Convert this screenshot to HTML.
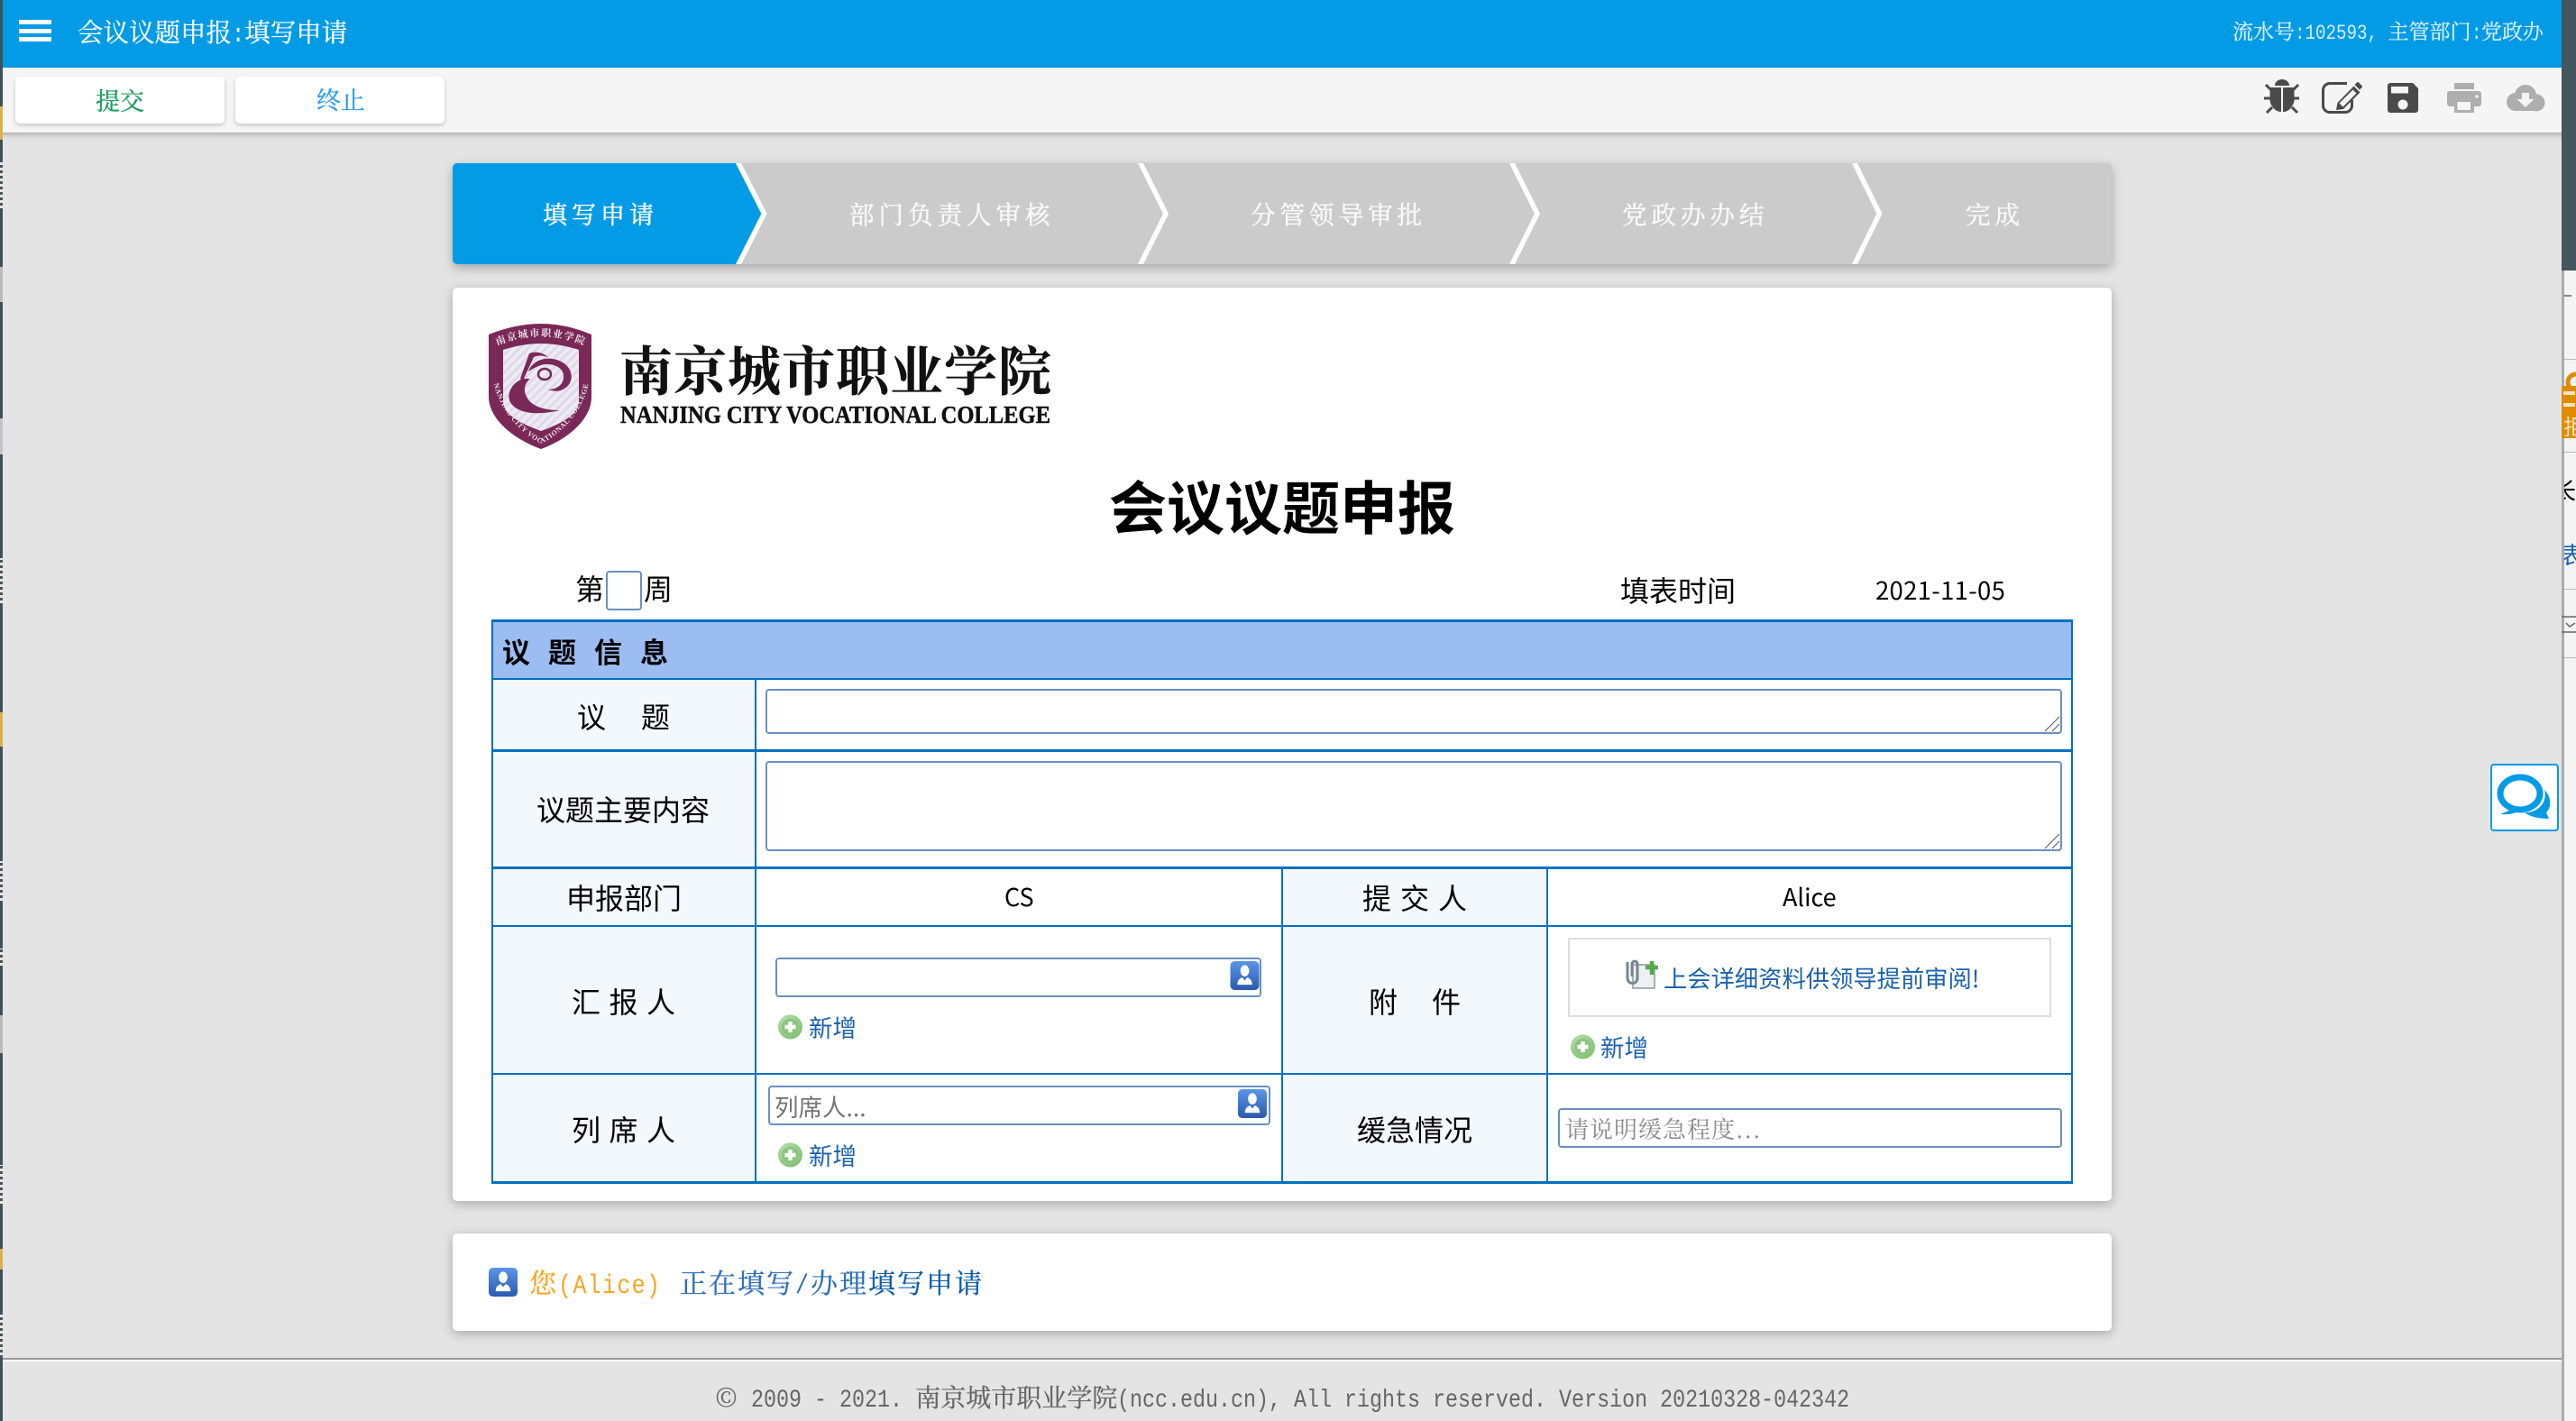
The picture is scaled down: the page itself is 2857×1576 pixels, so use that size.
<!DOCTYPE html>
<html lang="zh-CN">
<head>
<meta charset="utf-8">
<title>会议议题申报</title>
<style>
html,body{margin:0;padding:0;width:2857px;height:1576px;overflow:hidden;background:#e4e4e4}
body{position:relative;font-family:"Noto Sans CJK SC","Liberation Sans",sans-serif;color:#000}
.b{position:absolute;box-sizing:border-box}
.t{position:absolute;white-space:nowrap;height:40px;line-height:40px}
.s{font-family:"Noto Serif CJK SC","Liberation Serif",serif;-webkit-text-stroke:.3px currentColor}
.m{display:inline-block;font-family:"Liberation Mono",monospace;white-space:pre;transform:scaleX(.8333);transform-origin:0 50%;-webkit-text-stroke:0}
.step{font-size:27px;letter-spacing:5px;color:#fff;-webkit-text-stroke:.45px #fff}
.lb{font-size:32px}
.add{font-size:26.5px;color:#1a62ad}
input,textarea{position:absolute;box-sizing:border-box;margin:0;background:#fff;border:2px solid #6a8fc3;border-radius:4px;outline:none;font-family:"Noto Sans CJK SC",sans-serif;font-size:26.5px;padding:0 5px;resize:none}
input::placeholder{color:#757575;opacity:1}
#urg::placeholder{color:#8a8a8a}
</style>
</head>
<body>
<div class="b" style="left:0;top:0;width:2857px;height:75px;background:#039be5"></div>
<div class="b" style="left:0;top:75px;width:2857px;height:72px;background:#f5f5f5;box-shadow:0 2px 6px rgba(0,0,0,.28)"></div>
<div class="b" style="left:17px;top:85px;width:232px;height:52px;background:#fff;border-radius:5px;box-shadow:0 2px 5px rgba(0,0,0,.2)"></div>
<div class="b" style="left:261px;top:85px;width:232px;height:52px;background:#fff;border-radius:5px;box-shadow:0 2px 5px rgba(0,0,0,.2)"></div>
<div class="b" style="left:502px;top:181px;width:1840px;height:112px;background:#cbcbcb;border-radius:5px;box-shadow:0 4px 12px rgba(0,0,0,.28)"></div>
<div class="b" style="left:502px;top:319px;width:1840px;height:1013px;background:#fff;border-radius:5px;box-shadow:0 3px 12px rgba(0,0,0,.28)"></div>
<div class="b" style="left:502px;top:1368px;width:1840px;height:108px;background:#fff;border-radius:5px;box-shadow:0 3px 12px rgba(0,0,0,.28)"></div>
<div class="b" style="left:0;top:1506px;width:2841px;height:2px;background:#9a9a9a"></div>
<div class="b" style="left:0;top:1508px;width:2841px;height:2px;background:#fff"></div>
<div class="b" style="left:546px;top:754px;width:292px;height:557px;background:#f3f8fd"></div>
<div class="b" style="left:1422px;top:964px;width:294px;height:347px;background:#f3f8fd"></div>
<div class="b" style="left:547px;top:690px;width:1751px;height:62px;background:#9bbdf1"></div>
<div class="b" style="left:1739px;top:1040px;width:536px;height:88px;background:#fff;border:2px solid #ddd"></div>

<svg style="position:absolute;left:0;top:0" width="2857" height="1576" viewBox="0 0 2857 1576" xmlns="http://www.w3.org/2000/svg">
<defs>
<clipPath id="stepclip"><rect x="502" y="181" width="1840" height="112" rx="5"/></clipPath>
<linearGradient id="pg" x1="0" y1="0" x2="0" y2="1"><stop offset="0" stop-color="#5d95e8"/><stop offset="1" stop-color="#2a59ad"/></linearGradient>
<radialGradient id="gg" cx=".4" cy=".35" r=".8"><stop offset="0" stop-color="#c6e6ba"/><stop offset="1" stop-color="#74b767"/></radialGradient>
<pattern id="st" width="7" height="7" patternUnits="userSpaceOnUse" patternTransform="rotate(45)"><rect width="7" height="7" fill="#efebf4"/><rect width="3" height="7" fill="#dedbe9"/></pattern>
<pattern id="lines" width="3" height="6" patternUnits="userSpaceOnUse"><rect width="3" height="3" fill="#e6e6e6"/><rect y="3" width="3" height="3" fill="#46555e"/></pattern>
<symbol id="person" viewBox="0 0 33 33"><rect width="33" height="33" rx="5" fill="url(#pg)"/><ellipse cx="16.5" cy="11" rx="5" ry="6.5" fill="#fff"/><path d="M8 27C8 21 11 20 13.500 18.500L16.500 22 19.500 18.500C22 20 25 21 25 27Z" fill="#fff"/></symbol>
<symbol id="plus" viewBox="0 0 28 28"><circle cx="14" cy="14" r="13.5" fill="url(#gg)"/><circle cx="14" cy="14" r="9.5" fill="#8cc67e"/><path d="M14 8v12M8 14h12" stroke="#fff" stroke-width="4.5"/></symbol>
</defs>

<!-- left and right window strips -->
<rect x="0" y="0" width="3" height="1576" fill="#3f505a"/>
<rect x="0" y="118" width="3" height="37" fill="#dcb04c"/>
<rect x="0" y="180" width="3" height="51" fill="url(#lines)"/>
<rect x="0" y="296" width="3" height="39" fill="#bbb"/>
<rect x="0" y="464" width="3" height="40" fill="#c2c2c8"/>
<rect x="0" y="619" width="3" height="51" fill="url(#lines)"/>
<rect x="0" y="790" width="3" height="38" fill="#dcb04c"/>
<rect x="0" y="955" width="3" height="47" fill="url(#lines)"/>
<rect x="0" y="1052" width="3" height="19" fill="url(#lines)"/>
<rect x="0" y="1126" width="3" height="42" fill="#bbb"/>
<rect x="0" y="1292" width="3" height="46" fill="url(#lines)"/>
<rect x="0" y="1385" width="3" height="23" fill="#dcb04c"/>
<rect x="0" y="1458" width="3" height="47" fill="url(#lines)"/>
<rect x="2841" y="0" width="16" height="300" fill="#43555f"/>
<rect x="2841" y="300" width="16" height="1276" fill="#f4f4f4"/>
<rect x="2841" y="300" width="3" height="1276" fill="#aaa"/>
<rect x="2844" y="327" width="8" height="2" fill="#888"/>
<rect x="2844" y="398" width="13" height="1" fill="#bbb"/>
<rect x="2841" y="428" width="16" height="58" fill="#e08c00"/>
<circle cx="2857" cy="424" r="9" fill="none" stroke="#e08c00" stroke-width="5"/>
<rect x="2843" y="434" width="13" height="4" fill="#f6e3c0"/><rect x="2843" y="447" width="13" height="4" fill="#f6e3c0"/>
<rect x="2844" y="501" width="13" height="1" fill="#bbb"/>
<rect x="2844" y="653" width="13" height="1" fill="#bbb"/>
<path d="M2841 684h16M2841 701h16" stroke="#666" stroke-width="1.5"/><path d="M2846 691l4 4 6-4" fill="none" stroke="#666" stroke-width="1.5"/>
<rect x="2844" y="729" width="13" height="1" fill="#bbb"/>

<!-- hamburger -->
<rect x="21" y="22" width="36" height="5" fill="#fff"/><rect x="21" y="32" width="36" height="5" fill="#fff"/><rect x="21" y="41" width="36" height="5" fill="#fff"/>

<!-- toolbar icons -->
<g fill="#4a4a4a" stroke="none">
<path d="M2523 95a8 7 0 0 1 16 0z"/>
<path d="M2517.500 97H2530V124C2523 124 2519 118 2517.500 112Z"/>
<path d="M2532 97H2544.500V112C2543 118 2539 124 2532 124Z"/>
</g>
<path d="M2513 94l6 6M2511 109h8M2514 125l6-6M2549 94l-6 6M2550 109h-8M2548 125l-6-6" stroke="#4a4a4a" stroke-width="3" fill="none"/>
<path d="M2603 92.500H2584a7.500 7.500 0 0 0-7.500 7.500V117a7.500 7.500 0 0 0 7.500 7.500H2601a7.500 7.500 0 0 0 7.500-7.500V111" fill="none" stroke="#4a4a4a" stroke-width="3"/>
<path d="M2591 122l1.500-8 18-18.500 7 7L2599 121ZM2594.500 114.500l4 4 15-15-4-4Z" fill="#4a4a4a" fill-rule="evenodd"/>
<path d="M2611.500 94l2.500-2.500q1-1 2 0l3.500 3.500q1 1 0 2l-2.500 2.500Z" fill="#4a4a4a"/>
<path d="M2651 92H2676L2682 98V122a3 3 0 0 1-3 3H2651a3 3 0 0 1-3-3V95a3 3 0 0 1 3-3Z" fill="#4a4a4a"/>
<rect x="2652" y="96" width="19" height="7.500" fill="#f5f5f5"/><circle cx="2665" cy="116" r="5.500" fill="#f5f5f5"/>
<g fill="#aeaeae">
<rect x="2722" y="92" width="22" height="7"/>
<rect x="2714" y="101" width="38" height="17" rx="3"/>
<rect x="2722" y="112" width="22" height="13"/>
</g>
<rect x="2725.500" y="113" width="14.500" height="9" fill="#f5f5f5"/><circle cx="2747" cy="107" r="1.700" fill="#f5f5f5"/>
<g fill="#aeaeae"><circle cx="2790" cy="113" r="10"/><circle cx="2801" cy="106" r="12"/><circle cx="2813" cy="114" r="9.500"/><rect x="2790" y="110" width="23" height="13"/></g>
<path d="M2797 103h8v7h5.500l-9.500 9-9.500-9h5.500z" fill="#f5f5f5"/>

<!-- step chevrons -->
<g clip-path="url(#stepclip)">
<path d="M502 175H816L845 237 816 299H502Z" fill="#039be5"/>
<path d="M816 175L847.500 237 816 299M1262 175L1293 237 1262 299M1674 175L1705 237 1674 299M2054 175L2084.500 237 2054 299" fill="none" stroke="#fff" stroke-width="5.500"/>
</g>

<!-- logo shield -->
<path d="M542 371Q572 359 600 359 628 359 656 371V440C656 466 628 488 600 498 572 488 542 466 542 440Z" fill="#7a2858"/>
<path d="M558 388Q580 381 600 381 620 381 642 388V445C642 460 622 470 600 478 578 470 558 460 558 445Z" fill="url(#st)"/>
<path d="M580 420C566 425 560 440 568 449 578 460 600 460 621 455 606 455 590 452 584 440 580 432 582 425 588 420Z" fill="#7a2858"/>
<path d="M586 412C590 400 606 394 620 400 636 406 638 424 626 431 620 435 614 434 608 432 618 432 626 426 625 416 624 406 610 402 600 405 594 407 589 410 586 412Z" fill="#7a2858"/>
<path d="M587 392C594 389 602 391 608 396 600 394 596 394 592 396L580 422 577 420Z" fill="#7a2858"/>
<ellipse cx="604" cy="415" rx="7" ry="6" fill="none" stroke="#7a2858" stroke-width="2.500"/>
<path id="arcTop" d="M549 384Q600 362 651 384" fill="none"/>
<text font-family="'Noto Serif CJK SC',serif" font-size="11" fill="#efe6ec" font-weight="700"><textPath href="#arcTop" startOffset="50%" text-anchor="middle" letter-spacing="1.500">南京城市职业学院</textPath></text>
<path id="arcBot" d="M546 417C551 455 580 482 600 492 622 482 650 455 654 417" fill="none"/>
<text font-family="'Liberation Serif',serif" font-size="8" fill="#efe6ec" font-weight="700"><textPath href="#arcBot" startOffset="50%" text-anchor="middle" letter-spacing=".6">NANJING CITY VOCATIONAL COLLEGE</textPath></text>
<text x="688" y="469" font-family="'Liberation Serif',serif" font-weight="700" font-size="27" textLength="477" lengthAdjust="spacingAndGlyphs" fill="#111" stroke="#111" stroke-width=".5">NANJING CITY VOCATIONAL COLLEGE</text>

<!-- table lines -->
<g fill="#0070c0">
<rect x="545" y="687" width="1754" height="3"/>
<rect x="545" y="1310" width="1754" height="3"/>
<rect x="545" y="687" width="2" height="626"/>
<rect x="2297" y="687" width="2" height="626"/>
<rect x="545" y="752" width="1754" height="2"/>
<rect x="545" y="831" width="1754" height="3"/>
<rect x="545" y="961" width="1754" height="3"/>
<rect x="545" y="1026" width="1754" height="2"/>
<rect x="545" y="1190" width="1754" height="2"/>
<rect x="837" y="752" width="2" height="560"/>
<rect x="1421" y="961" width="2" height="351"/>
<rect x="1715" y="961" width="2" height="351"/>
</g>

<!-- attachment icon -->
<rect x="1811" y="1070" width="24" height="26" fill="#eef1f3" stroke="#8c98a0" stroke-width="1.500"/>
<path d="M1805 1067v18a5.500 5.500 0 0 0 11 0v-16a3 3 0 0 0-6 0v14" fill="none" stroke="#76858f" stroke-width="3"/>
<path d="M1832 1066v15M1825 1073h14" stroke="#54a84a" stroke-width="4.500"/>

<!-- add icons -->
<use href="#plus" x="862" y="1125" width="29" height="28"/>
<use href="#plus" x="862" y="1267" width="29" height="28"/>
<use href="#plus" x="1741" y="1147" width="29" height="28"/>
<use href="#person" x="542" y="1406" width="32" height="32"/>

<!-- chat button -->
<rect x="2763" y="848" width="74" height="73" rx="3" fill="#fff" stroke="#039be5" stroke-width="2"/>
<path d="M2822 876C2830 884 2830 895 2824 901L2827 908C2816 908 2806 906 2800 901 2812 902 2826 892 2822 876Z" fill="#039be5"/>
<ellipse cx="2795" cy="880" rx="22" ry="18" fill="#fff" stroke="#039be5" stroke-width="7"/>
<path d="M2786 893L2783 899 2773 903C2782 904 2792 902 2799 897Z" fill="#039be5"/>
</svg>

<!-- inputs -->
<input style="left:672px;top:633px;width:40px;height:44px" aria-label="周">
<textarea style="left:849px;top:764px;width:1438px;height:50px" aria-label="议题"></textarea>
<textarea style="left:849px;top:844px;width:1438px;height:100px" aria-label="内容"></textarea>
<input style="left:860px;top:1062px;width:539px;height:44px" aria-label="汇报人">
<input style="left:852px;top:1204px;width:557px;height:44px;padding-top:0" placeholder="列席人...">
<input id="urg" style="left:1728px;top:1229px;width:559px;height:44px;font-family:'Noto Serif CJK SC',serif;font-size:26px;letter-spacing:1px;padding-left:6px" placeholder="请说明缓急程度...">
<svg style="position:absolute;left:0;top:0;pointer-events:none" width="2857" height="1576" viewBox="0 0 2857 1576">
<use href="#person" x="1364" y="1066" width="33" height="32"/>
<use href="#person" x="1373" y="1208" width="32" height="32"/>
<path d="M2268 811L2284 795M2276 811L2284 803M2268 941L2284 925M2276 941L2284 933" stroke="#555" stroke-width="1" fill="none"/>
</svg>

<!-- clipped neighbouring content in the right strip -->
<div class="b" style="left:2844px;top:452px;width:13px;height:190px;overflow:hidden">
<div class="t" style="left:-1px;top:0;font-size:24px;color:#f6e3c0">拒</div>
<div class="t" style="left:-13px;top:72px;font-size:26px">长事</div>
<div class="t" style="left:-4px;top:143px;font-size:26px;color:#1a62ad">表</div>
</div>

<!-- header -->
<div class="t s" style="left:86px;top:15px;font-size:28.500px;color:#fff">会议议题申报<span class="m" style="width:.5em">:</span>填写申请</div>
<div class="t s" style="left:2476px;top:14px;font-size:23px;color:#d9eefa">流水号<span class="m" style="width:4.5em">:102593, </span>主管部门<span class="m" style="width:.5em">:</span>党政办</div>
<div class="t s" style="left:106px;top:91px;font-size:27px;color:#1a9a5c">提交</div>
<div class="t s" style="left:351px;top:90px;font-size:27px;color:#2a9df4">终止</div>

<!-- steps -->
<div class="t s step" style="left:602px;top:217px">填写申请</div>
<div class="t s step" style="left:942px;top:216px;font-size:27.500px;color:#f7f7f7">部门负责人审核</div>
<div class="t s step" style="left:1387px;top:216px;font-size:27.500px;color:#f7f7f7">分管领导审批</div>
<div class="t s step" style="left:1799px;top:216px;font-size:27.500px;color:#f7f7f7">党政办办结</div>
<div class="t s step" style="left:2180px;top:216px;font-size:27.500px;color:#f7f7f7">完成</div>

<!-- logo text & title -->
<div class="t s" style="left:687px;top:388px;font-size:59px;font-weight:700;letter-spacing:1px;color:#111">南京城市职业学院</div>
<div class="t" style="left:1230px;top:540px;font-size:64px;font-weight:700">会议议题申报</div>

<!-- form text -->
<div class="t lb" style="left:638px;top:632px">第</div>
<div class="t lb" style="left:714px;top:632px">周</div>
<div class="t" style="left:1797px;top:634px;font-size:32px">填表时间</div>
<div class="t" style="left:2080px;top:633px;font-size:27.500px;letter-spacing:.3px">2021-11-05</div>
<div class="t" style="left:557px;top:702px;font-size:31px;font-weight:700;letter-spacing:20px">议题信息</div>
<div class="t lb" style="left:640px;top:774px;letter-spacing:39px">议题</div>
<div class="t" style="left:595px;top:877px;font-size:32px">议题主要内容</div>
<div class="t lb" style="left:628px;top:975px">申报部门</div>
<div class="t" style="left:1114px;top:974px;font-size:27px">CS</div>
<div class="t lb" style="left:1511px;top:975px;letter-spacing:10px">提交人</div>
<div class="t" style="left:1977px;top:974px;font-size:27px">Alice</div>
<div class="t lb" style="left:634px;top:1090px;letter-spacing:9.500px">汇报人</div>
<div class="t lb" style="left:1518px;top:1090px;letter-spacing:38px">附件</div>
<div class="t lb" style="left:634px;top:1232px;letter-spacing:9.500px">列席人</div>
<div class="t" style="left:1505px;top:1232px;font-size:32px">缓急情况</div>
<div class="t add" style="left:897px;top:1119px">新增</div>
<div class="t add" style="left:897px;top:1261px">新增</div>
<div class="t add" style="left:1775px;top:1141px">新增</div>
<div class="t" style="left:1845px;top:1064px;font-size:26.300px;color:#1a62ad">上会详细资料供领导提前审阅!</div>

<!-- status line -->
<div class="t s" style="left:587px;top:1401px;font-size:30px;letter-spacing:2px;color:#2d6fb5"><span style="color:#f5a623">您<span class="m" style="width:135px;letter-spacing:1.600px">(Alice)</span></span>正在填写<span class="m" style="width:17px;letter-spacing:2px">/</span>办理<span style="color:#0d5cab">填写申请</span></div>

<!-- footer -->
<div class="t s" style="left:794px;top:1529px;font-size:28px;color:#666"><span style="display:inline-block;width:1.4em">©</span><span class="m" style="width:6.5em">2009 - 2021. </span>南京城市职业学院<span class="m" style="width:29em">(ncc.edu.cn), All rights reserved. Version 20210328-042342</span></div>
</body>
</html>
